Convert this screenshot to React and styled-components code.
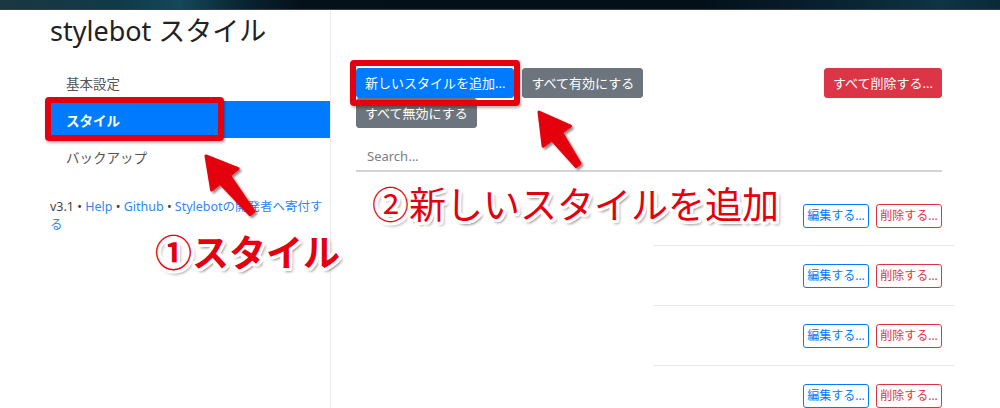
import React from 'react';
import styled, { createGlobalStyle } from 'styled-components';

const GlobalStyle = createGlobalStyle`
  html, body { margin: 0; padding: 0; background: #fff; }
  body {
    width: 1000px; height: 408px; overflow: hidden;
    font-family: "Noto Sans", "Noto Sans CJK JP", sans-serif;
    color: #212529;
  }
  * { box-sizing: border-box; }
`;

const Screen = styled.div`
  position: relative;
  width: 1000px;
  height: 408px;
  overflow: hidden;
`;

const TopBar = styled.div`
  height: 10px;
  background: linear-gradient(90deg, #1b3640 0%, #0f3a4a 12%, #14485a 18%, #0a2533 24%, #04111a 30%, #03101a 70%, #0a2634 86%, #0e3446 94%, #0a2a3a 100%);
  border-bottom: 1px solid #3c3f42;
`;

const Layout = styled.div`
  display: flex;
  height: 398px;
`;

const Sidebar = styled.aside`
  width: 331px;
  flex-shrink: 0;
  border-right: 1px solid #ececef;
  padding: 3px 0 0 50px;
`;

const Title = styled.h1`
  margin: 0;
  font-size: 27px;
  font-weight: 400;
  line-height: 36px;
  color: #222;
  white-space: nowrap;
`;

const Nav = styled.nav`
  margin-top: 15px;
  display: flex;
  flex-direction: column;
`;

const NavItem = styled.div`
  height: 37px;
  display: flex;
  align-items: center;
  padding: 0 16px;
  font-size: 13.5px;
  color: ${p => (p.$active ? '#fff' : '#555')};
  background: ${p => (p.$active ? '#007bff' : 'transparent')};
  font-weight: ${p => (p.$active ? 700 : 400)};
`;

const Footer = styled.p`
  margin: 23px 0 0;
  width: 274px;
  font-size: 12.5px;
  line-height: 18px;
  color: #444;
`;

const Link = styled.a`
  color: #2f86f0;
  text-decoration: none;
`;

const Main = styled.main`
  flex: 1;
  padding: 58px 58px 0 25px;
`;

const Toolbar = styled.div`
  display: flex;
  justify-content: space-between;
  align-items: flex-start;
`;

const ButtonGroup = styled.div`
  display: flex;
  flex-wrap: wrap;
  column-gap: 8px;
  width: 300px;
`;

const COLORS = {
  primary: '#007bff',
  secondary: '#6c757d',
  danger: '#dc3545',
};

const Button = styled.button`
  height: 30px;
  padding: 0 8px;
  border: 1px solid ${p => COLORS[p.$variant]};
  border-radius: 3px;
  background: ${p => COLORS[p.$variant]};
  color: #fff;
  font-family: "Noto Sans", "Noto Sans CJK JP", sans-serif;
  font-size: 13px;
  line-height: 20px;
  white-space: nowrap;
`;

const SearchInput = styled.input`
  display: block;
  width: 100%;
  margin-top: 14px;
  height: 30px;
  padding: 0 11px;
  border: none;
  border-bottom: 2px solid #d4d4d4;
  font-family: "Noto Sans", "Noto Sans CJK JP", sans-serif;
  font-size: 13px;
  color: #333;
  outline: none;
  &::placeholder { color: #7b8088; }
`;

const List = styled.div`
  margin: 14px -12px 0;
`;

const Row = styled.div`
  display: flex;
  height: 60px;
`;

const NameCell = styled.div`
  width: 310px;
  flex-shrink: 0;
`;

const Actions = styled.div`
  flex: 1;
  display: flex;
  justify-content: flex-end;
  align-items: flex-start;
  gap: 7px;
  padding: 18px 12px 0;
  border-bottom: 1px solid #e6e6e6;
`;

const OutlineButton = styled.button`
  height: 24px;
  width: 66px;
  padding: 0;
  border: 1px solid ${p => COLORS[p.$variant]};
  border-radius: 3px;
  background: #fff;
  color: ${p => COLORS[p.$variant]};
  font-family: "Noto Sans", "Noto Sans CJK JP", sans-serif;
  font-size: 12px;
  line-height: 18px;
  white-space: nowrap;
`;

/* ---------- annotations (overlay) ---------- */

const Overlay = styled.div`
  position: absolute;
  inset: 0;
  pointer-events: none;
`;

const Callout = styled.div`
  position: absolute;
  left: ${p => p.$x}px;
  top: ${p => p.$y}px;
  width: ${p => p.$w}px;
  height: ${p => p.$h}px;
  border: 6px solid #e4000f;
  border-radius: 4px;
  box-shadow: 1px 2px 3px rgba(0, 0, 0, 0.3);
`;

const Label = styled.div`
  position: absolute;
  left: ${p => p.$x}px;
  top: ${p => p.$y}px;
  font-family: "Noto Sans CJK JP", sans-serif;
  font-size: 37px;
  line-height: 1;
  font-weight: ${p => p.$weight};
  color: #e4000f;
  white-space: nowrap;
  text-shadow:
    3px 0 0 #fff, -3px 0 0 #fff, 0 3px 0 #fff, 0 -3px 0 #fff,
    2px 2px 0 #fff, -2px 2px 0 #fff, 2px -2px 0 #fff, -2px -2px 0 #fff,
    3px 2px 0 #fff, -3px 2px 0 #fff, 3px -2px 0 #fff, -3px -2px 0 #fff,
    2px 3px 0 #fff, -2px 3px 0 #fff, 2px -3px 0 #fff, -2px -3px 0 #fff,
    2px 4px 3px rgba(0, 0, 0, 0.35), 4px 3px 3px rgba(0, 0, 0, 0.25);
`;

const ArrowLayer = styled.svg`
  position: absolute;
  left: 0;
  top: 0;
  width: 1000px;
  height: 408px;
`;

function arrowPoints(tail, tip) {
  const dx = tip[0] - tail[0];
  const dy = tip[1] - tail[1];
  const len = Math.hypot(dx, dy);
  const ux = dx / len, uy = dy / len;
  const nx = -uy, ny = ux;
  const headLen = 30, headHalf = 17, shaftHead = 6, shaftTail = 2.5;
  const bx = tip[0] - ux * headLen, by = tip[1] - uy * headLen;
  const pts = [
    [tip[0], tip[1]],
    [bx + nx * headHalf, by + ny * headHalf],
    [bx + nx * shaftHead, by + ny * shaftHead],
    [tail[0] + nx * shaftTail, tail[1] + ny * shaftTail],
    [tail[0] - nx * shaftTail, tail[1] - ny * shaftTail],
    [bx - nx * shaftHead, by - ny * shaftHead],
    [bx - nx * headHalf, by - ny * headHalf],
  ];
  return pts.map(p => p.map(v => v.toFixed(1)).join(',')).join(' ');
}

function Arrows() {
  return (
    <ArrowLayer viewBox="0 0 1000 408">
      <defs>
        <filter id="ash" x="-20%" y="-20%" width="140%" height="140%">
          <feDropShadow dx="2" dy="2" stdDeviation="1.2" floodColor="#000" floodOpacity="0.45" />
        </filter>
      </defs>
      <polygon points={arrowPoints([252, 213], [206, 156])} fill="#e4000f" stroke="#e4000f" strokeWidth="3" strokeLinejoin="round" filter="url(#ash)" />
      <polygon points={arrowPoints([578, 165], [539, 112])} fill="#e4000f" stroke="#e4000f" strokeWidth="3" strokeLinejoin="round" filter="url(#ash)" />
    </ArrowLayer>
  );
}

export default function App() {
  const rows = [0, 1, 2, 3];
  return (
    <Screen>
      <GlobalStyle />
      <TopBar />
      <Layout>
        <Sidebar>
          <Title>stylebot スタイル</Title>
          <Nav>
            <NavItem>基本設定</NavItem>
            <NavItem $active>スタイル</NavItem>
            <NavItem>バックアップ</NavItem>
          </Nav>
          <Footer>
            v3.1 • <Link>Help</Link> • <Link>Github</Link> • <Link>Stylebotの開発者へ寄付する</Link>
          </Footer>
        </Sidebar>
        <Main>
          <Toolbar>
            <ButtonGroup>
              <Button $variant="primary">新しいスタイルを追加...</Button>
              <Button $variant="secondary">すべて有効にする</Button>
              <Button $variant="secondary">すべて無効にする</Button>
            </ButtonGroup>
            <Button $variant="danger">すべて削除する...</Button>
          </Toolbar>
          <SearchInput placeholder="Search..." />
          <List>
            {rows.map(i => (
              <Row key={i}>
                <NameCell />
                <Actions>
                  <OutlineButton $variant="primary">編集する...</OutlineButton>
                  <OutlineButton $variant="danger">削除する...</OutlineButton>
                </Actions>
              </Row>
            ))}
          </List>
        </Main>
      </Layout>
      <Overlay>
        <Callout $x={45} $y={97} $w={179} $h={44} />
        <Callout $x={350} $y={60} $w={170} $h={46} />
        <Arrows />
        <Label $x={155} $y={233} $weight={700}>①スタイル</Label>
        <Label $x={372} $y={185} $weight={400}>②新しいスタイルを追加</Label>
      </Overlay>
    </Screen>
  );
}
